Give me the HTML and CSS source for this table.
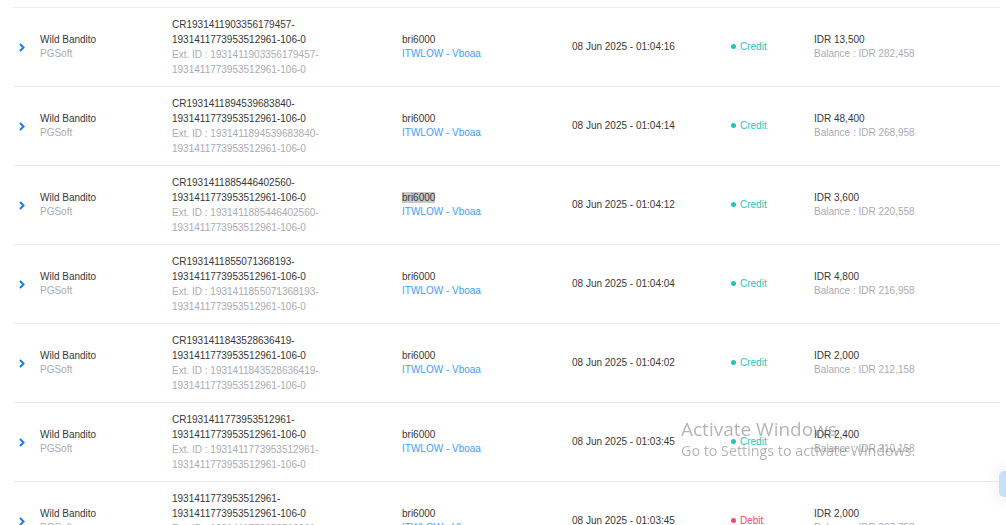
FILE: index.html
```html
<!DOCTYPE html>
<html>
<head>
<meta charset="utf-8">
<link rel="stylesheet" href="styles.css">
</head>
<body>
<div class="page">
  <div class="table">
    <div class="row">
      <div class="c-arrow"><svg class="chev" viewBox="0 0 6 9" width="6" height="9"><path d="M1 1 L4.5 4.5 L1 8" fill="none" stroke="#1a7bef" stroke-width="2"/></svg></div>
      <div class="c-game"><div class="main">Wild Bandito</div><div class="sub">PGSoft</div></div>
      <div class="c-id"><div class="main">CR1931411903356179457-<br>1931411773953512961-106-0</div><div class="sub">Ext. ID : 1931411903356179457-<br>1931411773953512961-106-0</div></div>
      <div class="c-user"><div class="main">bri6000</div><div class="link">ITWLOW - Vboaa</div></div>
      <div class="c-date">08 Jun 2025 - 01:04:16</div>
      <div class="c-status credit"><span class="dot"></span>Credit</div>
      <div class="c-amt"><div class="main">IDR 13,500</div><div class="sub">Balance : IDR 282,458</div></div>
    </div>
    <div class="row">
      <div class="c-arrow"><svg class="chev" viewBox="0 0 6 9" width="6" height="9"><path d="M1 1 L4.5 4.5 L1 8" fill="none" stroke="#1a7bef" stroke-width="2"/></svg></div>
      <div class="c-game"><div class="main">Wild Bandito</div><div class="sub">PGSoft</div></div>
      <div class="c-id"><div class="main">CR1931411894539683840-<br>1931411773953512961-106-0</div><div class="sub">Ext. ID : 1931411894539683840-<br>1931411773953512961-106-0</div></div>
      <div class="c-user"><div class="main">bri6000</div><div class="link">ITWLOW - Vboaa</div></div>
      <div class="c-date">08 Jun 2025 - 01:04:14</div>
      <div class="c-status credit"><span class="dot"></span>Credit</div>
      <div class="c-amt"><div class="main">IDR 48,400</div><div class="sub">Balance : IDR 268,958</div></div>
    </div>
    <div class="row">
      <div class="c-arrow"><svg class="chev" viewBox="0 0 6 9" width="6" height="9"><path d="M1 1 L4.5 4.5 L1 8" fill="none" stroke="#1a7bef" stroke-width="2"/></svg></div>
      <div class="c-game"><div class="main">Wild Bandito</div><div class="sub">PGSoft</div></div>
      <div class="c-id"><div class="main">CR1931411885446402560-<br>1931411773953512961-106-0</div><div class="sub">Ext. ID : 1931411885446402560-<br>1931411773953512961-106-0</div></div>
      <div class="c-user"><div class="main"><span class="sel">bri6000</span></div><div class="link">ITWLOW - Vboaa</div></div>
      <div class="c-date">08 Jun 2025 - 01:04:12</div>
      <div class="c-status credit"><span class="dot"></span>Credit</div>
      <div class="c-amt"><div class="main">IDR 3,600</div><div class="sub">Balance : IDR 220,558</div></div>
    </div>
    <div class="row">
      <div class="c-arrow"><svg class="chev" viewBox="0 0 6 9" width="6" height="9"><path d="M1 1 L4.5 4.5 L1 8" fill="none" stroke="#1a7bef" stroke-width="2"/></svg></div>
      <div class="c-game"><div class="main">Wild Bandito</div><div class="sub">PGSoft</div></div>
      <div class="c-id"><div class="main">CR1931411855071368193-<br>1931411773953512961-106-0</div><div class="sub">Ext. ID : 1931411855071368193-<br>1931411773953512961-106-0</div></div>
      <div class="c-user"><div class="main">bri6000</div><div class="link">ITWLOW - Vboaa</div></div>
      <div class="c-date">08 Jun 2025 - 01:04:04</div>
      <div class="c-status credit"><span class="dot"></span>Credit</div>
      <div class="c-amt"><div class="main">IDR 4,800</div><div class="sub">Balance : IDR 216,958</div></div>
    </div>
    <div class="row">
      <div class="c-arrow"><svg class="chev" viewBox="0 0 6 9" width="6" height="9"><path d="M1 1 L4.5 4.5 L1 8" fill="none" stroke="#1a7bef" stroke-width="2"/></svg></div>
      <div class="c-game"><div class="main">Wild Bandito</div><div class="sub">PGSoft</div></div>
      <div class="c-id"><div class="main">CR1931411843528636419-<br>1931411773953512961-106-0</div><div class="sub">Ext. ID : 1931411843528636419-<br>1931411773953512961-106-0</div></div>
      <div class="c-user"><div class="main">bri6000</div><div class="link">ITWLOW - Vboaa</div></div>
      <div class="c-date">08 Jun 2025 - 01:04:02</div>
      <div class="c-status credit"><span class="dot"></span>Credit</div>
      <div class="c-amt"><div class="main">IDR 2,000</div><div class="sub">Balance : IDR 212,158</div></div>
    </div>
    <div class="row">
      <div class="c-arrow"><svg class="chev" viewBox="0 0 6 9" width="6" height="9"><path d="M1 1 L4.5 4.5 L1 8" fill="none" stroke="#1a7bef" stroke-width="2"/></svg></div>
      <div class="c-game"><div class="main">Wild Bandito</div><div class="sub">PGSoft</div></div>
      <div class="c-id"><div class="main">CR1931411773953512961-<br>1931411773953512961-106-0</div><div class="sub">Ext. ID : 1931411773953512961-<br>1931411773953512961-106-0</div></div>
      <div class="c-user"><div class="main">bri6000</div><div class="link">ITWLOW - Vboaa</div></div>
      <div class="c-date">08 Jun 2025 - 01:03:45</div>
      <div class="c-status credit"><span class="dot"></span>Credit</div>
      <div class="c-amt"><div class="main">IDR 2,400</div><div class="sub">Balance : IDR 210,158</div></div>
    </div>
    <div class="row">
      <div class="c-arrow"><svg class="chev" viewBox="0 0 6 9" width="6" height="9"><path d="M1 1 L4.5 4.5 L1 8" fill="none" stroke="#1a7bef" stroke-width="2"/></svg></div>
      <div class="c-game"><div class="main">Wild Bandito</div><div class="sub">PGSoft</div></div>
      <div class="c-id"><div class="main">1931411773953512961-<br>1931411773953512961-106-0</div><div class="sub">Ext. ID : 1931411773953512961-<br>1931411773953512961-106-0</div></div>
      <div class="c-user"><div class="main">bri6000</div><div class="link">ITWLOW - Vboaa</div></div>
      <div class="c-date">08 Jun 2025 - 01:03:45</div>
      <div class="c-status debit"><span class="dot"></span>Debit</div>
      <div class="c-amt"><div class="main">IDR 2,000</div><div class="sub">Balance : IDR 207,758</div></div>
    </div>
  </div>
</div>
<div class="watermark">
  <div class="wm-title">Activate Windows</div>
  <div class="wm-sub">Go to Settings to activate Windows.</div>
</div>
<div class="scroll-top"></div>
</body>
</html>
```
FILE: styles.css
```css
html, body {
  margin: 0;
  padding: 0;
  background: #ffffff;
  overflow: hidden;
  height: 525px;
}
body {
  font-family: "Liberation Sans", Arial, sans-serif;
  font-size: 10px;
  color: #383838;
}
.page {
  padding: 7px 6px 0 13px;
}
.table {
  border-top: 1px solid #ebebf0;
}
.row {
  display: grid;
  grid-template-columns: 27px 132px 230px 170px 159px 83px 1fr;
  align-items: center;
  height: 78px;
  border-bottom: 1px solid #ebebf0;
}
.c-arrow {
  padding-left: 6px;
  display: flex;
  align-items: center;
}
.chev { display: block; }
.c-game, .c-user, .c-amt {
  line-height: 14px;
}
.c-id {
  line-height: 15px;
}
.main { color: #383838; }
.sub { color: #ababb3; }
.link { color: #409eff; }
.sel { background: #c8c8c8; }
.c-date {
  color: #383838;
  padding-bottom: 2px;
}
.c-status {
  display: flex;
  align-items: center;
  padding-bottom: 2px;
}
.dot {
  width: 5px;
  height: 5px;
  border-radius: 50%;
  margin-right: 4px;
}
.credit { color: #1fc6b8; }
.credit .dot { background: #1fc6b8; }
.debit { color: #f4476a; }
.debit .dot { background: #f4476a; }
.watermark {
  position: fixed;
  left: 681px;
  top: 417px;
  font-family: "Open Sans", "Noto Sans", sans-serif;
  color: rgba(120, 120, 120, 0.55);
  pointer-events: none;
}
.wm-title {
  font-size: 19px;
  line-height: 24px;
}
.wm-sub {
  font-size: 14.3px;
  line-height: 20px;
}
.scroll-top {
  position: fixed;
  left: 999px;
  top: 471px;
  width: 20px;
  height: 26px;
  border-radius: 5px;
  background: #c9e0fd;
  box-shadow: 0 0 12px 8px rgba(0, 0, 0, 0.03);
}
```
